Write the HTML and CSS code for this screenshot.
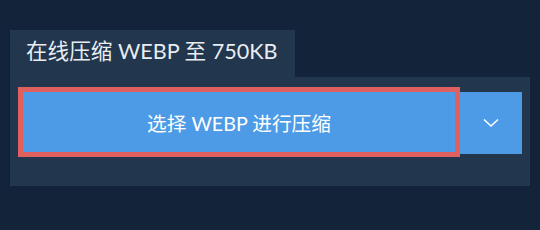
FILE: index.html
```html
<!DOCTYPE html>
<html lang="zh">
<head>
    <meta charset="UTF-8">
    <title>在线压缩 WEBP 至 750KB</title>
    <link rel="stylesheet" href="styles.css">
</head>
<body>
    <div class="compressor">
        <div class="tab">在线压缩 WEBP 至 750KB</div>
        <div class="panel">
            <div class="upload-row">
                <button class="upload-btn">选择 WEBP 进行压缩</button>
                <button class="dropdown-btn" aria-label="更多选项">
                    <svg width="16" height="10" viewBox="0 0 16 10">
                        <polyline points="1,1.5 8,8 15,1.5" fill="none" stroke="#ffffff" stroke-width="1.6"/>
                    </svg>
                </button>
            </div>
        </div>
    </div>
</body>
</html>
```

FILE: styles.css
```css
body {
    margin: 0;
    padding: 30px 10px 0 10px;
    background-color: #12233a;
    font-family: Lato, "Noto Sans CJK SC", sans-serif;
    color: #ffffff;
}

.tab {
    display: inline-block;
    width: 285px;
    height: 47px;
    box-sizing: border-box;
    padding: 7px 0 0 16px;
    background-color: #22364d;
    color: #e8edf2;
    font-size: 21.6px;
    line-height: 28px;
}

.panel {
    background-color: #22364d;
    padding: 10px 8px 29px 8px;
}

.upload-row {
    display: flex;
    align-items: flex-start;
}

.upload-btn {
    flex: 1;
    height: 70px;
    background-color: #4d9be6;
    border: 5px solid #e06060;
    color: #ffffff;
    font-family: Lato, "Noto Sans CJK SC", sans-serif;
    font-size: 19.7px;
    padding: 0;
    cursor: pointer;
}

.dropdown-btn {
    width: 62px;
    height: 62px;
    margin-top: 5px;
    background-color: #4d9be6;
    border: none;
    padding: 0;
    display: flex;
    align-items: center;
    justify-content: center;
    cursor: pointer;
}
```
